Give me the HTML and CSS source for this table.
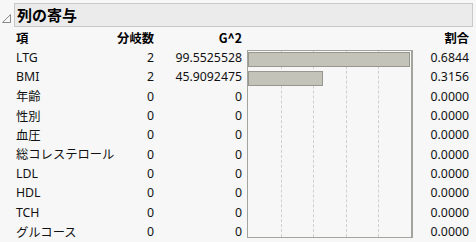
FILE: index.html
```html
<!DOCTYPE html>
<html lang="ja">
<head>
<meta charset="utf-8">
<title>列の寄与</title>
<link rel="stylesheet" href="styles.css">
</head>
<body>
<section class="report">
  <div class="outline">
    <svg class="disclosure" width="9" height="9" viewBox="0 0 9 9"><path d="M8.5 0.5 L8.5 8.5 L0.5 8.5 Z" fill="none" stroke="#8a8a8a" stroke-width="1"/></svg>
    <h1 class="title">列の寄与</h1>
  </div>
  <div class="table">
    <div class="th c-name">項</div>
    <div class="th c-n">分岐数</div>
    <div class="th c-g">G^2</div>
    <div class="th c-r">割合</div>

    <div class="chart">
      <span class="grid g1"></span><span class="grid g2"></span><span class="grid g3"></span><span class="grid g4"></span>
      <div class="slot"><div class="bar" style="width:99.55%"></div></div>
      <div class="slot"><div class="bar" style="width:45.91%"></div></div>
    </div>

    <div class="c-name">LTG</div><div class="c-n">2</div><div class="c-g">99.5525528</div><div class="c-r">0.6844</div>
    <div class="c-name">BMI</div><div class="c-n">2</div><div class="c-g">45.9092475</div><div class="c-r">0.3156</div>
    <div class="c-name">年齢</div><div class="c-n">0</div><div class="c-g">0</div><div class="c-r">0.0000</div>
    <div class="c-name">性別</div><div class="c-n">0</div><div class="c-g">0</div><div class="c-r">0.0000</div>
    <div class="c-name">血圧</div><div class="c-n">0</div><div class="c-g">0</div><div class="c-r">0.0000</div>
    <div class="c-name">総コレステロール</div><div class="c-n">0</div><div class="c-g">0</div><div class="c-r">0.0000</div>
    <div class="c-name">LDL</div><div class="c-n">0</div><div class="c-g">0</div><div class="c-r">0.0000</div>
    <div class="c-name">HDL</div><div class="c-n">0</div><div class="c-g">0</div><div class="c-r">0.0000</div>
    <div class="c-name">TCH</div><div class="c-n">0</div><div class="c-g">0</div><div class="c-r">0.0000</div>
    <div class="c-name">グルコース</div><div class="c-n">0</div><div class="c-g">0</div><div class="c-r">0.0000</div>
  </div>
</section>
</body>
</html>
```
FILE: styles.css
```css
html, body {
  margin: 0;
  padding: 0;
  background: #f7f7f7;
}

body {
  font-family: "Noto Sans", "Noto Sans CJK JP", sans-serif;
  font-size: 12.3px;
  color: #111;
  width: 476px;
  height: 242px;
  overflow: hidden;
}

.report {
  padding-top: 3px;
}

/* outline node header: disclosure triangle + title box */
.outline {
  display: flex;
  align-items: center;
  gap: 3px;
  padding-left: 2px;
}

.disclosure {
  flex: none;
  margin-top: 6px;
}

.title {
  flex: 1;
  margin: 0 3px 0 0;
  height: 22px;
  padding-left: 2px;
  background: #ebebeb;
  border: 1px solid #c8c8c8;
  font-family: "Noto Sans CJK JP", sans-serif;
  font-size: 15px;
  font-weight: 700;
  line-height: 22px;
  color: #000;
}

/* report table */
.table {
  display: grid;
  grid-template-columns: 16px 100px 38px 88px 5px 166px 56px;
  grid-template-rows: 21px repeat(10, 19.33px);
  align-items: center;
}

.table > div {
  white-space: nowrap;
}

.th {
  font-family: "Noto Sans CJK JP", sans-serif;
  font-weight: 700;
  color: #000;
}

.c-name { grid-column: 2; }
.c-n { grid-column: 3; text-align: right; }
.c-g { grid-column: 4; text-align: right; }
.c-r { grid-column: 7; text-align: right; }

/* bar chart column */
.chart {
  grid-column: 6;
  grid-row: 2 / span 10;
  align-self: stretch;
  position: relative;
  margin-top: 2px;
  margin-bottom: 3px;
  border: 1px solid #a4a49e;
  border-right-width: 2px;
  display: grid;
  grid-auto-rows: 19.33px;
  align-content: start;
}

.slot {
  padding-top: 1px;
}

.bar {
  position: relative;
  box-sizing: border-box;
  height: 15px;
  background: #c4c3b9;
  border: 1px solid #97978f;
}

.grid {
  position: absolute;
  top: 0;
  bottom: 0;
  border-left: 1px dashed #cfcfcf;
}

.g1 { left: 20%; }
.g2 { left: 40%; }
.g3 { left: 60%; }
.g4 { left: 80%; }
```
